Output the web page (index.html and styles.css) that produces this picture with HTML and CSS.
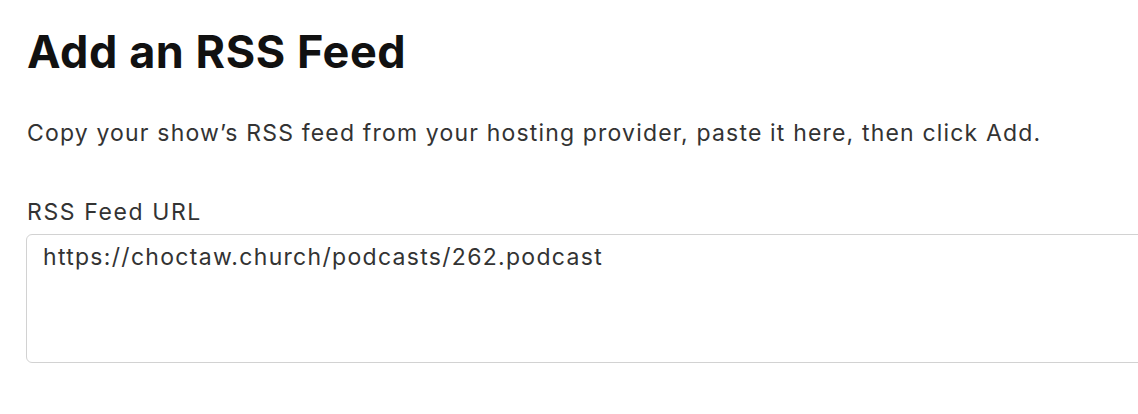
FILE: index.html
```html
<!DOCTYPE html>
<html lang="en">
<head>
<meta charset="utf-8">
<title>Add an RSS Feed</title>
<link rel="stylesheet" href="styles.css">
</head>
<body>
<main class="page">
  <h1 class="title">Add an RSS Feed</h1>
  <p class="intro">Copy your show’s RSS feed from your hosting provider, paste it here, then click Add.</p>
  <div class="field">
    <label class="label" for="feed">RSS Feed URL</label>
    <textarea class="input" id="feed">https://choctaw.church/podcasts/262.podcast</textarea>
  </div>
</main>
</body>
</html>
```

FILE: styles.css
```css
html, body {
  margin: 0;
  padding: 0;
  background: #ffffff;
  overflow: hidden;
}
body {
  font-family: Inter, "Noto Sans", sans-serif;
  color: #333333;
}
.page {
  padding: 24px 0 0 27px;
}
.title {
  margin: 0;
  font-size: 45px;
  font-weight: 700;
  line-height: 56px;
  color: #111111;
  letter-spacing: 0.55px;
}
.intro {
  margin: 38px 0 0 0;
  font-size: 23px;
  line-height: 30px;
  color: #333333;
  letter-spacing: 1.17px;
}
.field {
  margin-top: 49px;
  display: flex;
  flex-direction: column;
  gap: 7px;
}
.label {
  font-size: 23px;
  line-height: 30px;
  color: #333333;
  letter-spacing: 1.6px;
}
.input {
  box-sizing: border-box;
  width: 1130px;
  height: 129px;
  margin-left: -1px;
  padding: 7px 16px;
  border: 1.5px solid #d2d2d2;
  border-radius: 6px;
  font-family: Inter, "Noto Sans", sans-serif;
  font-size: 23px;
  line-height: 30px;
  letter-spacing: 1.3px;
  color: #333333;
  resize: none;
  outline: none;
}
```
